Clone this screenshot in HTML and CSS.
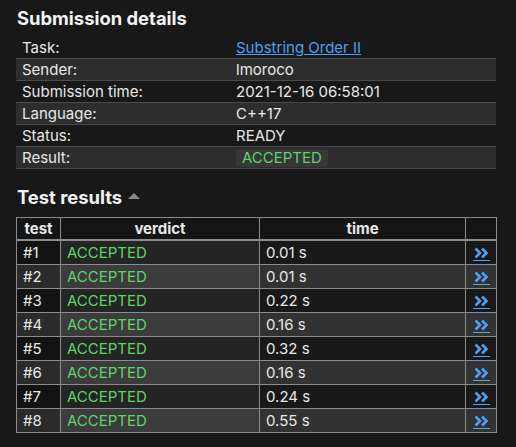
FILE: index.html
```html
<!DOCTYPE html>
<html>
<head>
<meta charset="utf-8">
<link rel="stylesheet" href="styles.css">
</head>
<body>
<main class="page">
  <h2 class="title">Submission details</h2>
  <table class="details">
    <tr><td class="label">Task:</td><td><a class="link" href="#">Substring Order II</a></td></tr>
    <tr class="alt"><td class="label">Sender:</td><td>lmoroco</td></tr>
    <tr><td class="label">Submission time:</td><td>2021-12-16 06:58:01</td></tr>
    <tr class="alt"><td class="label">Language:</td><td>C++17</td></tr>
    <tr><td class="label">Status:</td><td>READY</td></tr>
    <tr class="alt"><td class="label">Result:</td><td><span class="badge">ACCEPTED</span></td></tr>
  </table>

  <h2 class="title title-results">Test results <span class="caret"></span></h2>
  <table class="results">
    <colgroup><col class="w-test"><col class="w-verdict"><col class="w-time"><col class="w-link"></colgroup>
    <thead>
      <tr><th>test</th><th>verdict</th><th>time</th><th></th></tr>
    </thead>
    <tbody>
      <tr><td class="c-test">#1</td><td class="c-verdict ok">ACCEPTED</td><td class="c-time">0.01 s</td><td class="c-link"><a class="more" href="#"><svg width="15" height="12" viewBox="0 0 15 12"><path d="M1.5 1.5 L6 6 L1.5 10.5 M8 1.5 L12.5 6 L8 10.5" fill="none" stroke="currentColor" stroke-width="2.6" stroke-linejoin="miter"/></svg></a></td></tr>
      <tr><td class="c-test">#2</td><td class="c-verdict ok">ACCEPTED</td><td class="c-time">0.01 s</td><td class="c-link"><a class="more" href="#"><svg width="15" height="12" viewBox="0 0 15 12"><path d="M1.5 1.5 L6 6 L1.5 10.5 M8 1.5 L12.5 6 L8 10.5" fill="none" stroke="currentColor" stroke-width="2.6" stroke-linejoin="miter"/></svg></a></td></tr>
      <tr><td class="c-test">#3</td><td class="c-verdict ok">ACCEPTED</td><td class="c-time">0.22 s</td><td class="c-link"><a class="more" href="#"><svg width="15" height="12" viewBox="0 0 15 12"><path d="M1.5 1.5 L6 6 L1.5 10.5 M8 1.5 L12.5 6 L8 10.5" fill="none" stroke="currentColor" stroke-width="2.6" stroke-linejoin="miter"/></svg></a></td></tr>
      <tr><td class="c-test">#4</td><td class="c-verdict ok">ACCEPTED</td><td class="c-time">0.16 s</td><td class="c-link"><a class="more" href="#"><svg width="15" height="12" viewBox="0 0 15 12"><path d="M1.5 1.5 L6 6 L1.5 10.5 M8 1.5 L12.5 6 L8 10.5" fill="none" stroke="currentColor" stroke-width="2.6" stroke-linejoin="miter"/></svg></a></td></tr>
      <tr><td class="c-test">#5</td><td class="c-verdict ok">ACCEPTED</td><td class="c-time">0.32 s</td><td class="c-link"><a class="more" href="#"><svg width="15" height="12" viewBox="0 0 15 12"><path d="M1.5 1.5 L6 6 L1.5 10.5 M8 1.5 L12.5 6 L8 10.5" fill="none" stroke="currentColor" stroke-width="2.6" stroke-linejoin="miter"/></svg></a></td></tr>
      <tr><td class="c-test">#6</td><td class="c-verdict ok">ACCEPTED</td><td class="c-time">0.16 s</td><td class="c-link"><a class="more" href="#"><svg width="15" height="12" viewBox="0 0 15 12"><path d="M1.5 1.5 L6 6 L1.5 10.5 M8 1.5 L12.5 6 L8 10.5" fill="none" stroke="currentColor" stroke-width="2.6" stroke-linejoin="miter"/></svg></a></td></tr>
      <tr><td class="c-test">#7</td><td class="c-verdict ok">ACCEPTED</td><td class="c-time">0.24 s</td><td class="c-link"><a class="more" href="#"><svg width="15" height="12" viewBox="0 0 15 12"><path d="M1.5 1.5 L6 6 L1.5 10.5 M8 1.5 L12.5 6 L8 10.5" fill="none" stroke="currentColor" stroke-width="2.6" stroke-linejoin="miter"/></svg></a></td></tr>
      <tr><td class="c-test">#8</td><td class="c-verdict ok">ACCEPTED</td><td class="c-time">0.55 s</td><td class="c-link"><a class="more" href="#"><svg width="15" height="12" viewBox="0 0 15 12"><path d="M1.5 1.5 L6 6 L1.5 10.5 M8 1.5 L12.5 6 L8 10.5" fill="none" stroke="currentColor" stroke-width="2.6" stroke-linejoin="miter"/></svg></a></td></tr>
    </tbody>
  </table>
</main>
</body>
</html>
```

FILE: styles.css
```css
html, body {
  margin: 0;
  padding: 0;
  background: #181818;
}
body {
  color: #e8e8e8;
  font-family: Inter, "Noto Sans", "DejaVu Sans", sans-serif;
  font-size: 15px;
}
.page {
  padding: 7px 20px 0 16px;
  width: 480px;
}
.title {
  margin: 0 0 8px 1px;
  font-size: 18.4px;
  line-height: 22px;
  font-weight: 700;
  color: #f2f2f2;
}
.title-results {
  margin-top: 17px;
  margin-bottom: 9px;
  display: flex;
  align-items: center;
  gap: 6px;
}
.caret {
  width: 0;
  height: 0;
  border-left: 6px solid transparent;
  border-right: 6px solid transparent;
  border-bottom: 6px solid #8a8a8a;
  margin-top: -2px;
}
.details {
  width: 480px;
  border-collapse: collapse;
}
.details td {
  padding: 0 6px;
  height: 21px;
  line-height: 21px;
  border-bottom: 1px solid #4a4a4a;
}
.details td.label {
  width: 202px;
}
.details tr.alt td {
  background: #2d2d2d;
}
.link {
  color: #4ca0f5;
  text-decoration: underline;
}
.badge {
  display: inline-block;
  padding: 0 6px;
  height: 18px;
  line-height: 18px;
  border-radius: 3px;
  background: #373737;
  color: #5fd468;
}
.results {
  width: 480px;
  table-layout: fixed;
  border-collapse: collapse;
  border: 1px solid #8c8c8c;
}
.w-test { width: 44px; }
.w-verdict { width: 199px; }
.w-time { width: 206px; }
.w-link { width: 31px; }
.results th, .results td {
  border: 1px solid #8c8c8c;
  padding: 0 6px;
}
.results th {
  height: 21px;
  font-weight: 700;
  text-align: center;
  border-bottom: 2px solid #8c8c8c;
  background: #151515;
}
.results td {
  height: 23px;
}
.results .c-link { text-align: center; padding: 0; }
.results tbody tr:nth-child(odd) td { background: #181818; }
.results tbody tr:nth-child(odd) td.c-test { background: #131313; }
.results tbody tr:nth-child(odd) td.c-verdict { background: #242424; }
.results tbody tr:nth-child(even) td { background: #323232; }
.results tbody tr:nth-child(even) td.c-test { background: #2b2b2b; }
.results tbody tr:nth-child(even) td.c-verdict { background: #3c3c3c; }
.ok { color: #5fd468; }
.more {
  display: inline-block;
  color: #4ca0f5;
  border-bottom: 1px solid #4ca0f5;
  padding: 0 1px 1px;
  line-height: 0;
  vertical-align: middle;
}
.more svg { display: block; }
```
